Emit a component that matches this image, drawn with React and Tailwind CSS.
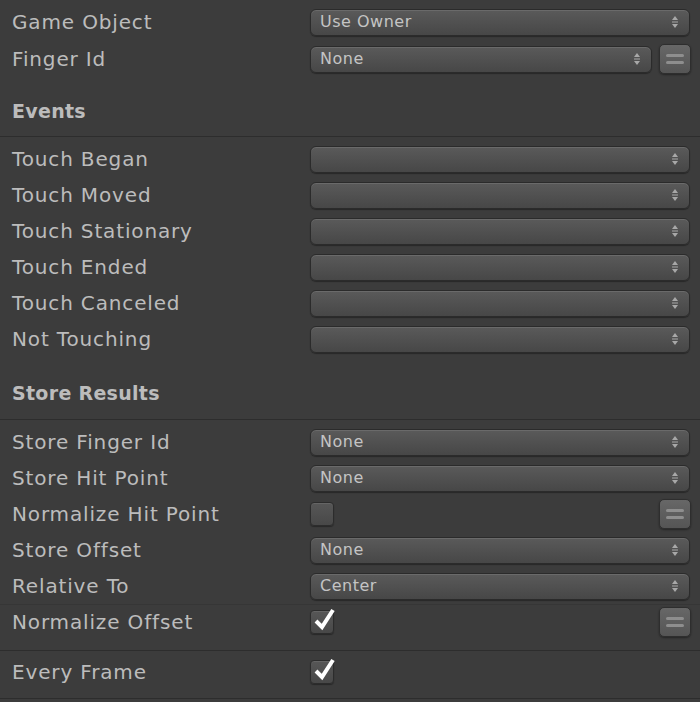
import React from "react";

const font = { fontFamily: '"DejaVu Sans", "Liberation Sans", sans-serif' };

function Arrows() {
  return (
    <svg width="8" height="14" viewBox="0 0 8 14" className="shrink-0">
      <path d="M4 1 L7 5 L1 5 Z" fill="#a8a8a8" />
      <rect x="1" y="6.5" width="6" height="1" fill="#a8a8a8" />
      <path d="M1 9 L7 9 L4 13 Z" fill="#a8a8a8" />
    </svg>
  );
}

function Dropdown({ value = "", className = "w-[380px]" }) {
  return (
    <div
      className={`${className} h-[27px] rounded-[6px] border border-[#2b2b2b] bg-gradient-to-b from-[#5a5a5a] to-[#474747] shadow-[inset_0_1px_0_#6a6a6a,0_1px_1px_rgba(0,0,0,0.35)] flex items-center justify-between pl-[9px] pr-[10px]`}
    >
      <span className="text-[16px] tracking-[0.5px] text-[#c4c4c4] leading-none">{value}</span>
      <Arrows />
    </div>
  );
}

function EqButton() {
  return (
    <div className="w-[32px] h-[30px] rounded-[5px] border border-[#2e2e2e] bg-gradient-to-b from-[#676767] to-[#555555] shadow-[0_1px_2px_rgba(0,0,0,0.4)] flex flex-col items-center justify-center gap-[4px]">
      <div className="w-[18px] h-[3px] rounded-full bg-[#8e8e8e]" />
      <div className="w-[18px] h-[3px] rounded-full bg-[#8e8e8e]" />
    </div>
  );
}

function Checkbox({ checked }) {
  return (
    <div className="relative w-[24px] h-[24px] rounded-[4px] border border-[#2c2c2c] bg-gradient-to-b from-[#575757] to-[#484848] shadow-[inset_0_1px_0_#656565,0_1px_1px_rgba(0,0,0,0.35)]">
      {checked && (
        <svg width="26" height="26" viewBox="0 0 26 26" className="absolute left-[2px] top-[-5px]">
          <path d="M3 15 L9 21 L20 4" fill="none" stroke="#ffffff" strokeWidth="4" strokeLinejoin="miter" />
        </svg>
      )}
    </div>
  );
}

function Row({ label, children, right, h = "h-[36px]", align = "items-center" }) {
  return (
    <div className={`flex ${align} ${h} pl-[12px] pr-[9px]`}>
      <div className="w-[298px] text-[20px] tracking-[0.85px] text-[#bcbcbc] leading-none">{label}</div>
      <div className="flex-1 flex items-center justify-between">
        {children}
        {right}
      </div>
    </div>
  );
}

function Header({ title, h, pb }) {
  return (
    <div className={`flex items-end ${h} ${pb} pl-[12px] border-b border-[#2d2d2d]`}>
      <span className="text-[19px] tracking-[0.3px] font-bold text-[#bcbcbc] leading-[24px]">{title}</span>
    </div>
  );
}

export default function App() {
  return (
    <div className="w-[700px] h-[702px] bg-[#3c3c3c] overflow-hidden" style={font}>
      <div className="pt-[4px]">
        <Row label="Game Object">
          <Dropdown value="Use Owner" />
        </Row>
        <Row label="Finger Id" h="h-[38px]">
          <Dropdown value="None" className="w-[342px]" />
          <EqButton />
        </Row>
      </div>
      <Header title="Events" h="h-[59px]" pb="pb-[13px]" />
      <div className="pt-[4px]">
        {["Touch Began", "Touch Moved", "Touch Stationary", "Touch Ended", "Touch Canceled", "Not Touching"].map((l) => (
          <Row key={l} label={l}>
            <Dropdown />
          </Row>
        ))}
      </div>
      <Header title="Store Results" h="h-[63px]" pb="pb-[14px]" />
      <div className="pt-[4px] border-b border-[#363636]">
        <Row label="Store Finger Id">
          <Dropdown value="None" />
        </Row>
        <Row label="Store Hit Point">
          <Dropdown value="None" />
        </Row>
        <Row label="Normalize Hit Point">
          <Checkbox />
          <EqButton />
        </Row>
        <Row label="Store Offset">
          <Dropdown value="None" />
        </Row>
        <Row label="Relative To">
          <Dropdown value="Center" />
        </Row>
      </div>
      <div className="h-[46px] pt-[2px] border-b border-[#2d2d2d]">
        <Row label="Normalize Offset" h="h-[30px]">
          <Checkbox checked />
          <EqButton />
        </Row>
      </div>
      <div className="h-[48px] pt-[6px] border-b border-[#2d2d2d]">
        <Row label="Every Frame" h="h-[30px]">
          <Checkbox checked />
        </Row>
      </div>
    </div>
  );
}
